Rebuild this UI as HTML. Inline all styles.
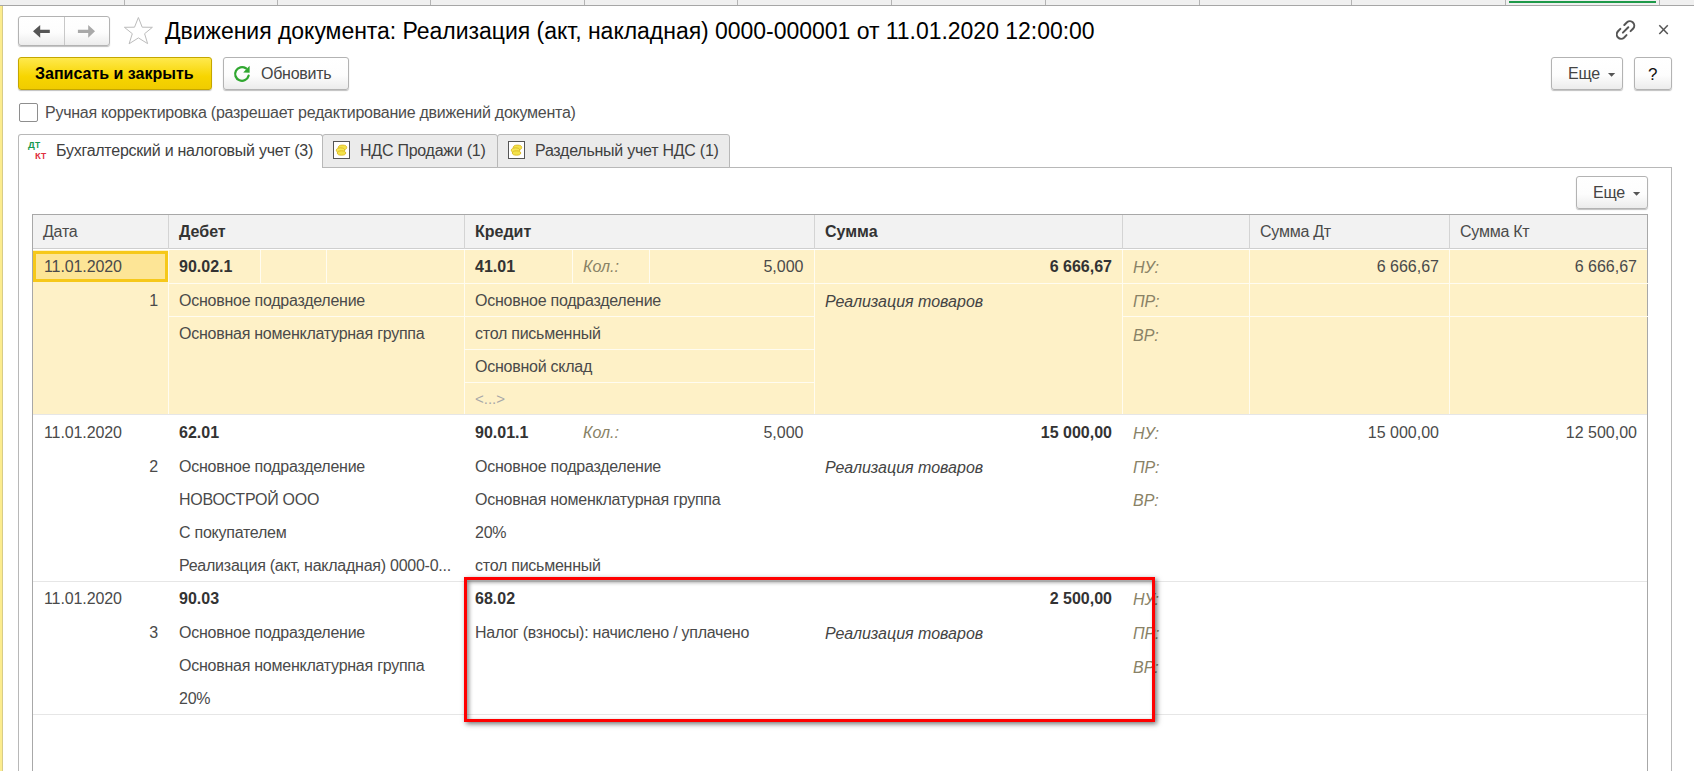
<!DOCTYPE html><html><head><meta charset="utf-8"><style>
*{box-sizing:border-box}
html,body{margin:0;padding:0;background:#fff;width:1694px;height:771px;overflow:hidden;position:relative;font-family:"Liberation Sans",sans-serif}
.a{position:absolute}
.t{position:absolute;font-size:16px;line-height:20px;white-space:nowrap;color:#4a4a4a;letter-spacing:-0.25px}
.b{font-weight:bold;color:#333;letter-spacing:0}
.i{font-style:italic;letter-spacing:0}
.n{letter-spacing:0}
.lbl{font-style:italic;color:#898266;letter-spacing:0}
.btn{position:absolute;border:1px solid #b3b3b3;border-radius:3px;background:linear-gradient(#fff 0%,#fdfdfd 55%,#ececec 100%);box-shadow:0 1px 1px rgba(0,0,0,.25)}
</style></head><body>
<div class="a" style="left:0;top:0;width:1694px;height:6px;background:#f0f0f0;border-bottom:1px solid #a6a6a6"></div>
<div class="a" style="left:124px;top:0;width:1px;height:5px;background:#b4b4b4"></div>
<div class="a" style="left:277px;top:0;width:1px;height:5px;background:#b4b4b4"></div>
<div class="a" style="left:430px;top:0;width:1px;height:5px;background:#b4b4b4"></div>
<div class="a" style="left:584px;top:0;width:1px;height:5px;background:#b4b4b4"></div>
<div class="a" style="left:737px;top:0;width:1px;height:5px;background:#b4b4b4"></div>
<div class="a" style="left:891px;top:0;width:1px;height:5px;background:#b4b4b4"></div>
<div class="a" style="left:1045px;top:0;width:1px;height:5px;background:#b4b4b4"></div>
<div class="a" style="left:1199px;top:0;width:1px;height:5px;background:#b4b4b4"></div>
<div class="a" style="left:1351px;top:0;width:1px;height:5px;background:#b4b4b4"></div>
<div class="a" style="left:1505px;top:0;width:1px;height:5px;background:#b4b4b4"></div>
<div class="a" style="left:1659px;top:0;width:1px;height:5px;background:#b4b4b4"></div>
<div class="a" style="left:1509px;top:1px;width:147px;height:2px;background:#1e9a4a"></div>
<div class="a" style="left:0;top:6px;width:2px;height:765px;background:#fcec8e"></div><div class="a" style="left:2px;top:6px;width:1px;height:765px;background:#d8cc88"></div>
<div class="btn" style="left:18px;top:16px;width:92px;height:30px"></div>
<div class="a" style="left:64px;top:17px;width:1px;height:28px;background:#c8c8c8"></div>
<svg class="a" style="left:0;top:0" width="160" height="50"><path d="M33,31.3 L40.2,25 L40.2,29.7 L49.8,29.7 L49.8,33 L40.2,33 L40.2,37.7 Z" fill="#555"/><path d="M95,31.3 L88.2,25 L88.2,29.7 L77.9,29.7 L77.9,33 L88.2,33 L88.2,37.7 Z" fill="#a9a9a9"/><path d="M138.4,17.5 L142.2,27.2 L152.4,27.3 L144.6,33.7 L147.6,43.6 L138.4,37.9 L129.1,43.8 L132.3,33.7 L124.4,27.3 L134.5,27.2 Z" fill="none" stroke="#bcbcbc" stroke-width="1" stroke-linejoin="miter"/></svg>
<div class="a" style="left:165px;top:18px;font-size:23px;line-height:26px;color:#000;letter-spacing:-0.03px;white-space:nowrap">Движения документа: Реализация (акт, накладная) 0000-000001 от 11.01.2020 12:00:00</div>
<svg class="a" style="left:1616px;top:20px" width="20" height="20"><g fill="none" stroke="#555" stroke-width="2" stroke-linecap="round"><path d="M8.3,5 L11,2.3 A4.4,4.4 0 0 1 17.2,8.5 L14.6,11.1"/><path d="M4.3,8.9 L1.8,11.5 A4.4,4.4 0 0 0 8,17.7 L10.5,15.1"/><path d="M6.9,12.6 L12.3,7.2"/></g></svg>
<svg class="a" style="left:1655px;top:21px" width="18" height="18"><g stroke="#555" stroke-width="1.5"><path d="M4.3,4.3 L12.8,13"/><path d="M12.8,4.3 L4.3,13"/></g></svg>
<div class="a" style="left:18px;top:57px;width:194px;height:33px;border:1px solid #c4a600;border-radius:3px;background:linear-gradient(#ffe94d,#f7d500 60%,#f0cc00);box-shadow:0 1px 1px rgba(0,0,0,.25)"></div>
<div class="t b" style="left:35px;top:64px;color:#000">Записать и закрыть</div>
<div class="btn" style="left:223px;top:57px;width:126px;height:33px"></div>
<svg class="a" style="left:230px;top:62px" width="24" height="24"><path d="M15.9,6.3 A6.85,6.85 0 1 0 18.6,13.7" fill="none" stroke="#30a730" stroke-width="2.3" stroke-linecap="round"/><path d="M13.2,10.6 L19.6,3.7 L19.6,10.7 Z" fill="#30a730"/></svg>
<div class="t" style="left:261px;top:64px;color:#444">Обновить</div>
<div class="btn" style="left:1551px;top:57px;width:72px;height:33px"></div>
<div class="t" style="left:1568px;top:64px;color:#444">Еще</div>
<svg class="a" style="left:1606px;top:72px" width="12" height="6"><path d="M2,1 L9.2,1 L5.6,4.8 Z" fill="#555"/></svg>
<div class="btn" style="left:1634px;top:57px;width:38px;height:33px"></div>
<div class="t" style="left:1648px;top:65px;color:#111;font-size:17px">?</div>
<div class="a" style="left:19px;top:103px;width:19px;height:19px;border:1px solid #8e8e8e;border-radius:2px;background:#fff"></div>
<div class="a" style="left:18px;top:167px;width:1654px;height:620px;border:1px solid #b8b8b8;background:#fff"></div>
<div class="a" style="left:322px;top:134px;width:176px;height:34px;border:1px solid #b8b8b8;border-radius:3px 3px 0 0;background:#ebebeb"></div>
<div class="a" style="left:497px;top:134px;width:233px;height:34px;border:1px solid #b8b8b8;border-radius:3px 3px 0 0;background:#ebebeb"></div>
<div class="a" style="left:18px;top:134px;width:305px;height:34px;border:1px solid #b8b8b8;border-bottom:none;border-radius:3px 3px 0 0;background:#fff"></div>
<div class="a" style="left:19px;top:166px;width:303px;height:3px;background:#fff"></div>
<div class="a" style="left:28px;top:139.2px;font:bold 9.5px/12px 'Liberation Sans';color:#189a4f;letter-spacing:0.3px">Д<span style="font-size:8.5px">Т</span></div>
<div class="a" style="left:35px;top:149.7px;font:bold 9.5px/12px 'Liberation Sans';color:#e0303e;letter-spacing:0.3px">К<span style="font-size:8.5px">Т</span></div>
<svg class="a" style="left:333px;top:141px" width="18" height="18"><rect x="0.5" y="0.5" width="16" height="17" fill="#fff" stroke="#555"/><ellipse cx="9.5" cy="6.5" rx="4.2" ry="2.4" fill="#f3e24a" stroke="#d9b21a" stroke-width="0.8"/><ellipse cx="7.5" cy="9.3" rx="4.2" ry="2.4" fill="#f5e856" stroke="#d9b21a" stroke-width="0.8"/><ellipse cx="8.5" cy="12" rx="4.2" ry="2.2" fill="#f3e24a" stroke="#d9b21a" stroke-width="0.8"/></svg>
<svg class="a" style="left:508px;top:141px" width="18" height="18"><rect x="0.5" y="0.5" width="16" height="17" fill="#fff" stroke="#555"/><ellipse cx="9.5" cy="6.5" rx="4.2" ry="2.4" fill="#f3e24a" stroke="#d9b21a" stroke-width="0.8"/><ellipse cx="7.5" cy="9.3" rx="4.2" ry="2.4" fill="#f5e856" stroke="#d9b21a" stroke-width="0.8"/><ellipse cx="8.5" cy="12" rx="4.2" ry="2.2" fill="#f3e24a" stroke="#d9b21a" stroke-width="0.8"/></svg>
<div class="btn" style="left:1576px;top:176px;width:72px;height:33px"></div>
<div class="t" style="left:1593px;top:183px;color:#444">Еще</div>
<svg class="a" style="left:1631px;top:191px" width="12" height="6"><path d="M2,1 L9.2,1 L5.6,4.8 Z" fill="#555"/></svg>
<div class="a" style="left:32px;top:214px;width:1616px;height:600px;border:1px solid #a8a8a8;border-bottom:none"></div>
<div class="a" style="left:33px;top:215px;width:1614px;height:34px;background:#f2f2f2;border-bottom:1px solid #cfcfcf"></div>
<div class="a" style="left:168px;top:215px;width:1px;height:34px;background:#d4d4d4"></div>
<div class="a" style="left:464px;top:215px;width:1px;height:34px;background:#d4d4d4"></div>
<div class="a" style="left:814px;top:215px;width:1px;height:34px;background:#d4d4d4"></div>
<div class="a" style="left:1122px;top:215px;width:1px;height:34px;background:#d4d4d4"></div>
<div class="a" style="left:1249px;top:215px;width:1px;height:34px;background:#d4d4d4"></div>
<div class="a" style="left:1449px;top:215px;width:1px;height:34px;background:#d4d4d4"></div>
<div class="a" style="left:33px;top:250px;width:1614px;height:164px;background:#fef1c7"></div>
<div class="a" style="left:168px;top:250px;width:1px;height:164px;background:#fffcf0"></div>
<div class="a" style="left:464px;top:250px;width:1px;height:164px;background:#fffcf0"></div>
<div class="a" style="left:814px;top:250px;width:1px;height:164px;background:#fffcf0"></div>
<div class="a" style="left:1122px;top:250px;width:1px;height:164px;background:#fffcf0"></div>
<div class="a" style="left:1249px;top:250px;width:1px;height:164px;background:#fffcf0"></div>
<div class="a" style="left:1449px;top:250px;width:1px;height:164px;background:#fffcf0"></div>
<div class="a" style="left:260px;top:250px;width:1px;height:33px;background:#fffcf0"></div>
<div class="a" style="left:326px;top:250px;width:1px;height:33px;background:#fffcf0"></div>
<div class="a" style="left:572px;top:250px;width:1px;height:33px;background:#fffcf0"></div>
<div class="a" style="left:649px;top:250px;width:1px;height:33px;background:#fffcf0"></div>
<div class="a" style="left:168px;top:283px;width:1480px;height:1px;background:#fffcf0"></div>
<div class="a" style="left:168px;top:316px;width:296px;height:1px;background:#fffcf0"></div>
<div class="a" style="left:464px;top:316px;width:350px;height:1px;background:#fffcf0"></div>
<div class="a" style="left:1122px;top:316px;width:526px;height:1px;background:#fffcf0"></div>
<div class="a" style="left:464px;top:349px;width:350px;height:1px;background:#fffcf0"></div>
<div class="a" style="left:464px;top:382px;width:350px;height:1px;background:#fffcf0"></div>
<div class="a" style="left:33px;top:251px;width:135px;height:31px;border:3px solid #f6c81a;background:#fde596"></div>
<div class="a" style="left:33px;top:414px;width:1614px;height:1px;background:#e6e6e6"></div>
<div class="a" style="left:33px;top:581px;width:1614px;height:1px;background:#e6e6e6"></div>
<div class="a" style="left:33px;top:714px;width:1614px;height:1px;background:#e6e6e6"></div>
<div class="t " style="left:45px;top:102.7px;color:#4d4d4d">Ручная корректировка (разрешает редактирование движений документа)</div>
<div class="t " style="left:56px;top:140.6px;color:#404040">Бухгалтерский и налоговый учет (3)</div>
<div class="t " style="left:360px;top:140.6px;color:#404040">НДС Продажи (1)</div>
<div class="t " style="left:535px;top:140.6px;color:#404040">Раздельный учет НДС (1)</div>
<div class="t " style="left:43px;top:221.6px;">Дата</div>
<div class="t b" style="left:179px;top:221.6px;">Дебет</div>
<div class="t b" style="left:475px;top:221.6px;">Кредит</div>
<div class="t b" style="left:825px;top:221.6px;">Сумма</div>
<div class="t " style="left:1260px;top:221.6px;">Сумма Дт</div>
<div class="t " style="left:1460px;top:221.6px;">Сумма Кт</div>
<div class="t n" style="left:44px;top:257.0px;letter-spacing:-0.1px">11.01.2020</div>
<div class="t " style="right:1536px;top:291.0px;">1</div>
<div class="t b" style="left:179px;top:257.0px;">90.02.1</div>
<div class="t " style="left:179px;top:291.0px;">Основное подразделение</div>
<div class="t " style="left:179px;top:324.0px;">Основная номенклатурная группа</div>
<div class="t b" style="left:475px;top:257.0px;">41.01</div>
<div class="t " style="left:475px;top:291.0px;">Основное подразделение</div>
<div class="t " style="left:475px;top:324.0px;">стол письменный</div>
<div class="t " style="left:475px;top:357.0px;">Основной склад</div>
<div class="t " style="left:475px;top:389.0px;color:#a8a8a8;font-size:15px;letter-spacing:0">&lt;...&gt;</div>
<div class="t lbl" style="left:583px;top:257.0px;">Кол.:</div>
<div class="t n" style="right:890.5px;top:257.0px;">5,000</div>
<div class="t b" style="right:582px;top:257.0px;">6 666,67</div>
<div class="t i" style="left:825px;top:291.8px;color:#444">Реализация товаров</div>
<div class="t lbl" style="left:1133px;top:257.6px;">НУ:</div>
<div class="t lbl" style="left:1133px;top:291.8px;">ПР:</div>
<div class="t lbl" style="left:1133px;top:325.7px;">ВР:</div>
<div class="t n" style="right:255px;top:257.0px;">6 666,67</div>
<div class="t n" style="right:57px;top:257.0px;">6 666,67</div>
<div class="t n" style="left:44px;top:423.0px;letter-spacing:-0.1px">11.01.2020</div>
<div class="t " style="right:1536px;top:457.0px;">2</div>
<div class="t b" style="left:179px;top:423.0px;">62.01</div>
<div class="t " style="left:179px;top:457.0px;">Основное подразделение</div>
<div class="t " style="left:179px;top:490.0px;">НОВОСТРОЙ ООО</div>
<div class="t " style="left:179px;top:523.0px;">С покупателем</div>
<div class="t " style="left:179px;top:556.0px;">Реализация (акт, накладная) 0000-0...</div>
<div class="t b" style="left:475px;top:423.0px;">90.01.1</div>
<div class="t " style="left:475px;top:457.0px;">Основное подразделение</div>
<div class="t " style="left:475px;top:490.0px;">Основная номенклатурная группа</div>
<div class="t " style="left:475px;top:523.0px;">20%</div>
<div class="t " style="left:475px;top:556.0px;">стол письменный</div>
<div class="t lbl" style="left:583px;top:423.0px;">Кол.:</div>
<div class="t n" style="right:890.5px;top:423.0px;">5,000</div>
<div class="t b" style="right:582px;top:423.0px;">15 000,00</div>
<div class="t i" style="left:825px;top:457.8px;color:#444">Реализация товаров</div>
<div class="t lbl" style="left:1133px;top:423.9px;">НУ:</div>
<div class="t lbl" style="left:1133px;top:457.8px;">ПР:</div>
<div class="t lbl" style="left:1133px;top:491.4px;">ВР:</div>
<div class="t n" style="right:255px;top:423.0px;">15 000,00</div>
<div class="t n" style="right:57px;top:423.0px;">12 500,00</div>
<div class="t n" style="left:44px;top:589.0px;letter-spacing:-0.1px">11.01.2020</div>
<div class="t " style="right:1536px;top:623.0px;">3</div>
<div class="t b" style="left:179px;top:589.0px;">90.03</div>
<div class="t " style="left:179px;top:623.0px;">Основное подразделение</div>
<div class="t " style="left:179px;top:656.0px;">Основная номенклатурная группа</div>
<div class="t " style="left:179px;top:689.0px;">20%</div>
<div class="t b" style="left:475px;top:589.0px;">68.02</div>
<div class="t " style="left:475px;top:623.0px;">Налог (взносы): начислено / уплачено</div>
<div class="t b" style="right:582px;top:589.0px;">2 500,00</div>
<div class="t i" style="left:825px;top:623.8px;color:#444">Реализация товаров</div>
<div class="t lbl" style="left:1133px;top:589.6px;">НУ:</div>
<div class="t lbl" style="left:1133px;top:623.8px;">ПР:</div>
<div class="t lbl" style="left:1133px;top:657.7px;">ВР:</div>
<div class="a" style="left:464px;top:577px;width:691px;height:145px;border:3px solid #ff0000;box-shadow:2px 2px 5px rgba(0,0,0,.55), inset 2px 2px 4px rgba(0,0,0,.45)"></div>
</body></html>
